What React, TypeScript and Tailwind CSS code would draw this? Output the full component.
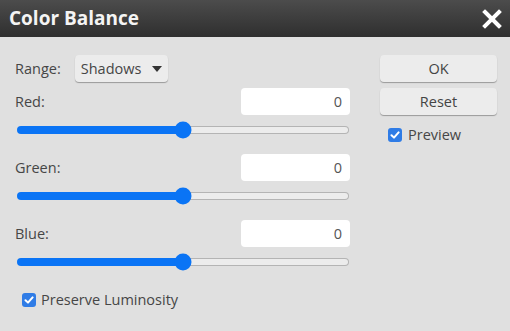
import React from 'react';

function Check() {
  return (
    <span className="flex h-[14px] w-[14px] items-center justify-center rounded-[3px] bg-[#2f7ce6]">
      <svg width="10" height="10" viewBox="0 0 10 10">
        <path d="M1.5 5.2 L4 7.6 L8.6 2.4" fill="none" stroke="white" strokeWidth="2" strokeLinecap="round" strokeLinejoin="round" />
      </svg>
    </span>
  );
}

function Slider() {
  return (
    <div className="flex h-[30px] items-center pl-[2px] pr-[1px]">
      <div className="relative flex h-[8px] w-full">
        <div className="h-full w-1/2 rounded-l-full bg-[#0a74f5]" />
        <div className="h-full w-1/2 rounded-r-full border border-[#b4b4b4] border-l-0 bg-[#ececec]" />
        <div className="absolute left-1/2 top-1/2 h-[17px] w-[17px] -translate-x-1/2 -translate-y-1/2 rounded-full bg-[#0a74f5]" />
      </div>
    </div>
  );
}

function Channel({ label }: { label: string }) {
  return (
    <div>
      <div className="flex h-[27px] items-center justify-between">
        <span>{label}</span>
        <div className="flex h-[27px] w-[109px] items-center justify-end rounded-[4px] bg-white pr-[8px] text-[#555]">0</div>
      </div>
      <Slider />
    </div>
  );
}

function Button({ children }: { children: React.ReactNode }) {
  return (
    <button className="flex h-[27px] w-full items-center justify-center rounded-[4px] bg-[#ececec] text-[#444] shadow-[0_1px_1px_#9a9a9a]">
      {children}
    </button>
  );
}

export default function App() {
  return (
    <div className="h-[331px] w-[510px] bg-[#e0e0e0] text-[14.5px] text-[#464646]" style={{ fontFamily: '"Open Sans", sans-serif' }}>
      <div className="flex h-[37px] items-center justify-between bg-gradient-to-b from-[#4c4c4c] to-[#2f2f2f] pl-[9px] pr-[8px]">
        <h1 className="text-[19px] font-bold text-[#f4f4f4]">Color Balance</h1>
        <svg width="20" height="20" viewBox="0 0 20 20">
          <path d="M3 3 L17 17 M17 3 L3 17" stroke="white" strokeWidth="4" strokeLinecap="square" />
        </svg>
      </div>
      <div className="flex pt-[18px]">
        <div className="ml-[15px] flex w-[335px] flex-col">
          <div className="flex h-[27px] items-center">
            <span>Range:</span>
            <div className="ml-[14px] flex h-[27px] w-[93px] items-center rounded-[4px] bg-[#ececec] pl-[6px] shadow-[0_1px_1px_#9a9a9a]">
              <span>Shadows</span>
              <svg className="ml-[11px]" width="10" height="6" viewBox="0 0 10 6">
                <path d="M0 0 H10 L5 6 Z" fill="#333" />
              </svg>
            </div>
          </div>
          <div className="mt-[6px] flex flex-col gap-[9px]">
            <Channel label="Red:" />
            <Channel label="Green:" />
            <Channel label="Blue:" />
          </div>
          <div className="mt-[13px] flex h-[20px] items-center gap-[5px] pl-[7px]">
            <Check />
            <span>Preserve Luminosity</span>
          </div>
        </div>
        <div className="ml-[30px] flex w-[117px] flex-col">
          <Button>OK</Button>
          <div className="mt-[6px]">
            <Button>Reset</Button>
          </div>
          <div className="mt-[10px] flex h-[20px] items-center gap-[6px] pl-[8px]">
            <Check />
            <span>Preview</span>
          </div>
        </div>
      </div>
    </div>
  );
}
